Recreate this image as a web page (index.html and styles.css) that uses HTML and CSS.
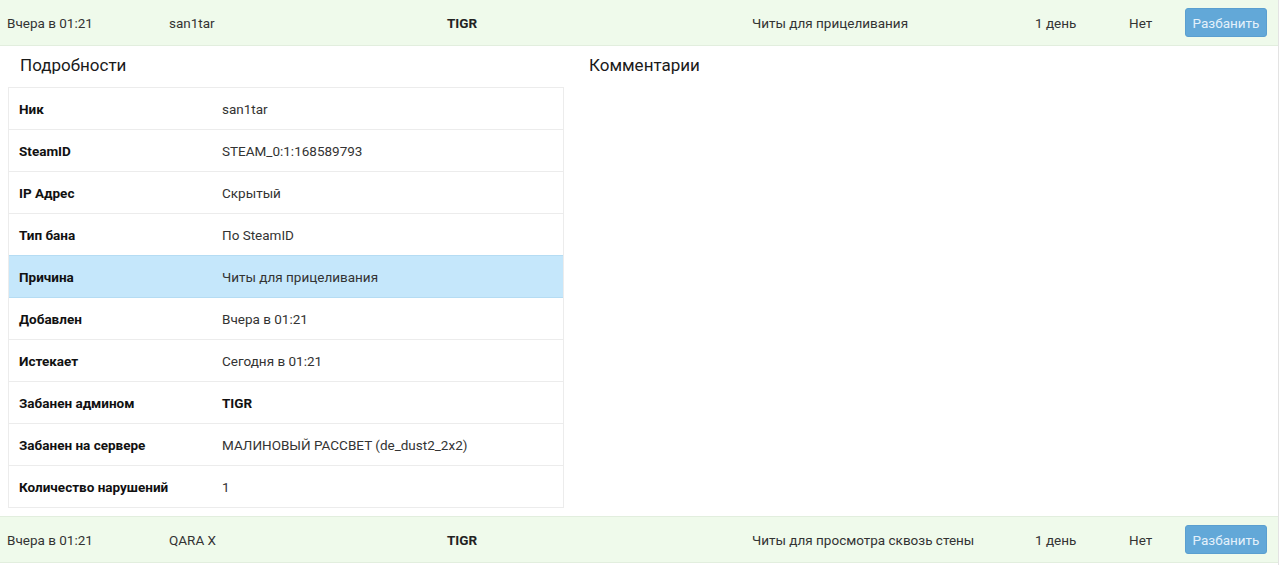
FILE: index.html
```html
<!DOCTYPE html>
<html lang="ru">
<head>
  <meta charset="UTF-8">
  <title>Баны</title>
  <link rel="stylesheet" href="styles.css">
</head>
<body>
<div class="bans">
  <div class="ban-row">
    <div class="cell c-date">Вчера в 01:21</div>
    <div class="cell c-nick">san1tar</div>
    <div class="cell c-admin"><b>TIGR</b></div>
    <div class="cell c-reason">Читы для прицеливания</div>
    <div class="cell c-term">1 день</div>
    <div class="cell c-exp">Нет</div>
    <div class="cell c-act"><button class="btn-unban">Разбанить</button></div>
  </div>

  <div class="ban-details">
    <div class="col-info">
      <h4>Подробности</h4>
      <div class="info">
        <div class="info-row"><div class="lbl">Ник</div><div class="val">san1tar</div></div>
        <div class="info-row"><div class="lbl">SteamID</div><div class="val">STEAM_0:1:168589793</div></div>
        <div class="info-row"><div class="lbl">IP Адрес</div><div class="val">Скрытый</div></div>
        <div class="info-row"><div class="lbl">Тип бана</div><div class="val">По SteamID</div></div>
        <div class="info-row info-row_active"><div class="lbl">Причина</div><div class="val">Читы для прицеливания</div></div>
        <div class="info-row"><div class="lbl">Добавлен</div><div class="val">Вчера в 01:21</div></div>
        <div class="info-row"><div class="lbl">Истекает</div><div class="val">Сегодня в 01:21</div></div>
        <div class="info-row"><div class="lbl">Забанен админом</div><div class="val"><b>TIGR</b></div></div>
        <div class="info-row"><div class="lbl">Забанен на сервере</div><div class="val">МАЛИНОВЫЙ РАССВЕТ (de_dust2_2x2)</div></div>
        <div class="info-row"><div class="lbl">Количество нарушений</div><div class="val">1</div></div>
      </div>
    </div>
    <div class="col-comments">
      <h4>Комментарии</h4>
    </div>
  </div>

  <div class="ban-row">
    <div class="cell c-date">Вчера в 01:21</div>
    <div class="cell c-nick">QARA X</div>
    <div class="cell c-admin"><b>TIGR</b></div>
    <div class="cell c-reason">Читы для просмотра сквозь стены</div>
    <div class="cell c-term">1 день</div>
    <div class="cell c-exp">Нет</div>
    <div class="cell c-act"><button class="btn-unban">Разбанить</button></div>
  </div>
</div>
</body>
</html>
```

FILE: styles.css
```css
*{
  margin: 0;
  padding: 0;
  box-sizing: border-box;
}
body{
  font-family: Roboto, "Noto Sans", sans-serif;
  font-size: 13.5px;
  color: #333;
  background: #fff;
}
.bans{
  width: 1279px;
  min-height: 565px;
  border-right: 1px solid #e3e3e3;
}
.ban-row{
  display: flex;
  align-items: center;
  height: 46px;
  background-color: #effaeb;
  border-bottom: 1px solid #e2eede;
}
.ban-details + .ban-row{
  border-top: 1px solid #e2eede;
  height: 47px;
}
.cell{
  padding: 0 7px;
  white-space: nowrap;
}
.c-date{ width: 162px; }
.c-nick{ width: 278px; }
.c-admin{ width: 305px; color: #222; }
.c-reason{ width: 283px; }
.c-term{ width: 94px; }
.c-exp{ width: 56px; }
.c-act{ flex: 1; }
.btn-unban{
  display: block;
  width: 82px;
  height: 29px;
  font-family: inherit;
  font-size: 13.5px;
  color: #e4f1fb;
  background-color: #62a8d8;
  border: 1px solid #5a9fd0;
  border-radius: 3px;
}
.ban-details{
  display: flex;
  gap: 13px;
  padding: 8px 0 8px 8px;
}
.ban-details h4{
  padding-left: 12px;
  margin-bottom: 11px;
  font-size: 17px;
  font-weight: 400;
  line-height: 22px;
  color: #1a1a1a;
}
.col-info{
  width: 556px;
}
.col-comments{
  flex: 1;
}
.info{
  border: 1px solid #ececec;
}
.info-row{
  display: flex;
  align-items: center;
  height: 42px;
  border-top: 1px solid #ececec;
}
.info-row:first-child{
  border-top: none;
  height: 41px;
}
.info-row_active{
  background-color: #c5e7fb;
  border-top-color: #b5dcf3;
}
.info-row_active + .info-row{
  border-top-color: #b5dcf3;
}
.lbl{
  width: 202px;
  padding: 0 10px;
  font-weight: bold;
  color: #111;
}
.val{
  padding: 0 11px;
}
.val b{
  color: #111;
}
```
